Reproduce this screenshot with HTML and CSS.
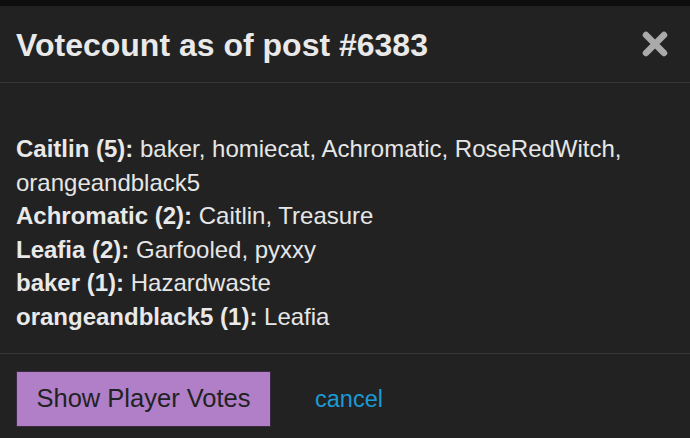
FILE: index.html
```html
<!DOCTYPE html>
<html>
<head>
<meta charset="utf-8">
<link rel="stylesheet" href="styles.css">
</head>
<body>
<div class="topbar"></div>
<div class="modal">
  <div class="modal-header">
    <h1 class="title">Votecount as of post #6383</h1>
    <button class="close" aria-label="close">
      <svg width="26" height="26" viewBox="0 0 26 26"><path d="M4 4 L22 22 M22 4 L4 22" stroke="#aaaaaa" stroke-width="6.5" stroke-linecap="round" fill="none"/></svg>
    </button>
  </div>
  <div class="modal-body">
    <p class="votes">
      <b>Caitlin (5):</b> baker, homiecat, Achromatic, RoseRedWitch, orangeandblack5<br>
      <b>Achromatic (2):</b> Caitlin, Treasure<br>
      <b>Leafia (2):</b> Garfooled, pyxxy<br>
      <b>baker (1):</b> Hazardwaste<br>
      <b>orangeandblack5 (1):</b> Leafia
    </p>
  </div>
  <div class="modal-footer">
    <button class="btn-primary">Show Player Votes</button>
    <a class="cancel" href="#">cancel</a>
  </div>
</div>
</body>
</html>
```

FILE: styles.css
```css
html, body {
  margin: 0;
  padding: 0;
  background: #222222;
  color: #e6e6e6;
  font-family: "Liberation Sans", Arial, sans-serif;
  overflow: hidden;
}
.topbar {
  height: 6px;
  background: #0e0e0e;
}
.modal {
  display: flex;
  flex-direction: column;
}
.modal-header {
  height: 76px;
  display: flex;
  align-items: center;
  justify-content: space-between;
  padding: 0 22px 0 16px;
  border-bottom: 1px solid #363636;
}
.title {
  margin: 0;
  font-size: 32px;
  font-weight: bold;
  color: #e9e9e9;
  line-height: 1;
  padding-top: 2px;
}
.close {
  background: none;
  border: 0;
  padding: 0;
  margin: 0;
  display: flex;
  margin-top: -1px;
}
.modal-body {
  padding: 49px 16px 19px 16px;
  border-bottom: 1px solid #363636;
}
.votes {
  margin: 0;
  font-size: 24px;
  line-height: 33.6px;
  color: #e6e6e6;
}
.votes b {
  color: #e9e9e9;
}
.modal-footer {
  display: flex;
  align-items: center;
  padding: 17px 16px 0 16px;
  gap: 44px;
}
.btn-primary {
  height: 56px;
  padding: 0 18px;
  background: #b07fc7;
  border: 1px solid #3a2a40;
  color: #222222;
  font-family: "Liberation Sans", Arial, sans-serif;
  font-size: 25.5px;
  line-height: 1;
  width: 255px;
  white-space: nowrap;
}
.cancel {
  color: #1b9ad6;
  font-size: 23.5px;
  text-decoration: none;
  margin-top: 2px;
}
```
